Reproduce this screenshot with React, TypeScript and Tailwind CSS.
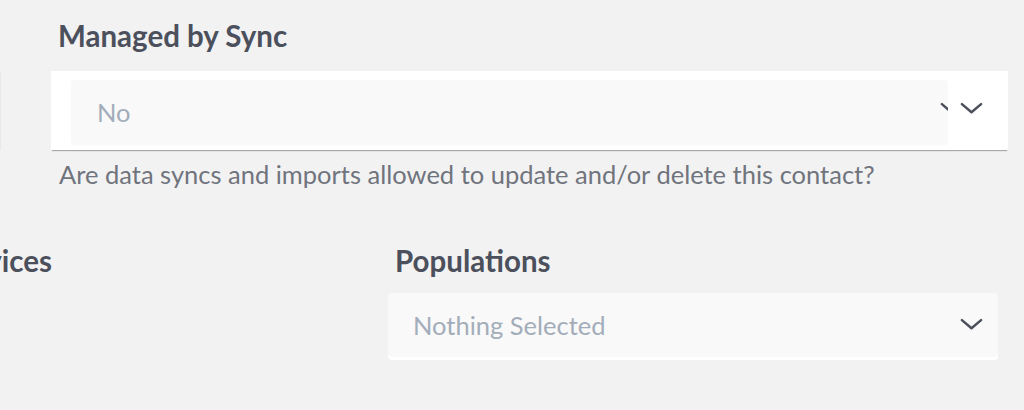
const font = { fontFamily: 'Lato, "Open Sans", sans-serif' };

function Chevron({ className = '' }: { className?: string }) {
  return (
    <svg viewBox="0 0 24 12" className={className} fill="none" stroke="currentColor" strokeWidth={2.6} strokeLinecap="round" strokeLinejoin="round">
      <path d="M2 2l10 8.5L22 2" />
    </svg>
  );
}

export default function App() {
  return (
    <div className="relative h-[410px] w-[1024px] overflow-hidden bg-[#f2f2f2]" style={font}>
      {/* faint edge from neighbouring field */}
      <div className="absolute left-0 top-[72px] h-[78px] w-px bg-[#e8e8e8]" />

      {/* Managed by Sync */}
      <div className="ml-[51px] w-[957px] pt-[18px]">
        <div className="pl-[7px] text-[29.5px] font-bold leading-[35px] text-[#4b505c]">Managed by Sync</div>
        <div className="relative mt-[18px] h-[79px] bg-white pl-[20px] pr-[60px] pt-[9px] shadow-[0_2px_1px_-1px_rgba(0,0,0,0.3)]">
          <Chevron className="absolute left-[909px] top-[31px] h-[12px] w-[23px] text-[#4b505c]" />
          <div className="relative flex h-[65px] items-center overflow-hidden rounded-[4px] bg-[#f9f9f9] pl-[26px] text-[25.5px] text-[#a3adb9]">
            No
            <Chevron className="absolute left-[869px] top-[22px] h-[12px] w-[23px] text-[#4b505c]" />
          </div>
        </div>
        <p className="mt-[9px] pl-[8px] text-[25.5px] leading-[30px] text-[#70747d]">
          Are data syncs and imports allowed to update and/or delete this contact?
        </p>
      </div>

      {/* second row */}
      <div className="mt-[54px] flex">
        <div className="flex w-[52px] justify-end overflow-hidden whitespace-nowrap">
          <span className="text-[29.5px] font-bold leading-[35px] text-[#4b505c]">Services</span>
        </div>
        <div className="ml-[336px] w-[610px]">
          <div className="pl-[7px] text-[29.5px] font-bold leading-[35px] text-[#4b505c]">Populations</div>
          <div className="mt-[15px] flex h-[64px] items-center justify-between rounded-[4px] bg-[#f9f9f9] pl-[25px] pr-[15px] shadow-[0_3px_0_#ffffff]">
            <span className="text-[25.5px] text-[#a3adb9]">Nothing Selected</span>
            <Chevron className="-mt-[3px] h-[12px] w-[23px] text-[#4b505c]" />
          </div>
        </div>
      </div>
    </div>
  );
}
